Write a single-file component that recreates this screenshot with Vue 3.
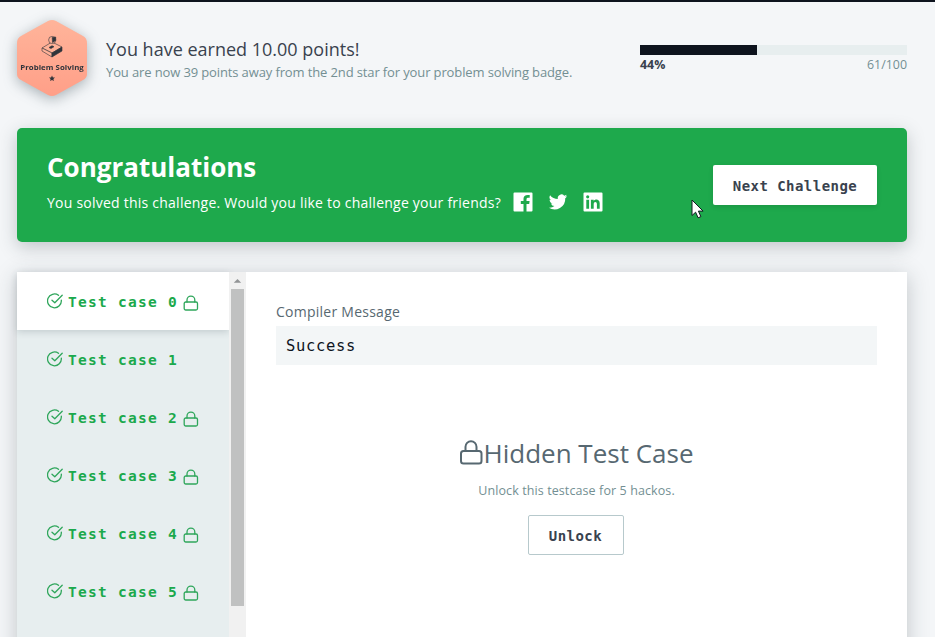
<script setup>
const cases = [
  { id: 0, locked: true },
  { id: 1, locked: false },
  { id: 2, locked: true },
  { id: 3, locked: true },
  { id: 4, locked: true },
  { id: 5, locked: true },
]
const progress = 44
</script>

<template>
  <div class="page">
    <header class="earned">
      <svg class="badge" viewBox="0 0 72 78">
        <defs>
          <linearGradient id="coral" x1="0" y1="0" x2="0" y2="1">
            <stop offset="0" stop-color="#ffb49a" />
            <stop offset="1" stop-color="#ff9f88" />
          </linearGradient>
        </defs>
        <path d="M32 2q4-2 8 0l27 15q4 2 4 7v31q0 4-4 6L40 76q-4 2-8 0L5 61q-4-2-4-6V24q0-5 4-7z" fill="url(#coral)" />
        <g stroke="#30343b" stroke-width=".6" stroke-linejoin="round">
          <path d="M26 29l10-6 10 5-10 6z" fill="#ffb197" />
          <path d="M26 29v3l10 6v-4z" fill="#ffb197" />
          <path d="M36 34l10-6v4l-10 6z" fill="#30343b" />
          <path d="M33 28.500l3-1.800 2 1-3 1.800z" fill="#30343b" />
          <circle cx="36.200" cy="21" r="3.600" fill="#ffb197" />
          <path d="M36.200 18.500l3.500-.5v3.500l-3.200 2z" fill="#30343b" />
        </g>
        <text x="36" y="51" text-anchor="middle" class="badge-name">Problem Solving</text>
        <path d="M36 56.500l.9 1.900 2.100.2-1.600 1.400.5 2.100-1.900-1.100-1.900 1.100.5-2.100-1.600-1.400 2.100-.2z" fill="#30343b" />
      </svg>
      <div class="earned-text">
        <h1>You have earned 10.00 points!</h1>
        <p>You are now 39 points away from the 2nd star for your problem solving badge.</p>
      </div>
      <div class="progress">
        <div class="track"><div class="fill" :style="{ width: progress + '%' }"></div></div>
        <div class="figures"><b>{{ progress }}%</b><span>61/100</span></div>
      </div>
    </header>

    <section class="banner">
      <div class="banner-text">
        <h2>Congratulations</h2>
        <div class="share">
          <p>You solved this challenge. Would you like to challenge your friends?</p>
          <svg class="social" viewBox="0 0 20 20">
            <path fill-rule="evenodd" d="M1.500.5h17q1 0 1 1v17q0 1-1 1h-5V12h2.700l.4-3h-3.100V7.200q0-1.400 1.500-1.400h1.700V3.100q-6.200-.9-6.200 3.700V9H7.800v3h2.700v7.500h-9q-1 0-1-1v-17q0-1 1-1z" />
          </svg>
          <svg class="social" viewBox="0 0 24 24">
            <path d="M23 5.100a9 9 0 0 1-2.600.7 4.500 4.500 0 0 0 2-2.500 9 9 0 0 1-2.900 1.100 4.500 4.500 0 0 0-7.700 4.100A12.800 12.800 0 0 1 2.500 3.800a4.500 4.500 0 0 0 1.400 6 4.500 4.500 0 0 1-2-.6c0 2.200 1.500 4.100 3.600 4.500a4.500 4.500 0 0 1-2 .1 4.500 4.500 0 0 0 4.200 3.100A9 9 0 0 1 1 18.800a12.800 12.800 0 0 0 19.700-11.400A9 9 0 0 0 23 5.100z" />
          </svg>
          <svg class="social" viewBox="0 0 20 20">
            <path fill-rule="evenodd" d="M1.500.5h17q1 0 1 1v17q0 1-1 1h-17q-1 0-1-1v-17q0-1 1-1zM3.300 7.700v9h2.800v-9zM4.700 3.200a1.600 1.600 0 1 0 0 3.200 1.600 1.600 0 0 0 0-3.200zM7.900 7.700v9h2.800v-4.600c0-2.700 3.200-2.800 3.200 0v4.600h2.800v-5.500c0-4.200-4.500-4.700-6-2.200V7.700z" />
          </svg>
        </div>
      </div>
      <button class="next">Next Challenge</button>
    </section>

    <section class="results">
      <nav class="cases">
        <div v-for="c in cases" :key="c.id" class="case" :class="{ active: c.id === 0 }">
          <svg class="check" viewBox="0 0 16 16">
            <path d="M14.300 7.100A6.900 6.900 0 1 1 11.500 2.300M5 7.200l2.800 2.600 7.400-7.500" />
          </svg>
          <span>Test case {{ c.id }}</span>
          <svg v-if="c.locked" class="lock" viewBox="0 0 16 16">
            <rect x="1.200" y="7" width="13.300" height="8" rx="1.500" />
            <path d="M4 7V5a3.900 3.900 0 0 1 7.800 0v2" />
          </svg>
        </div>
      </nav>
      <div class="scrollbar">
        <svg class="arrow" viewBox="0 0 14 17"><path d="M3 11l4-4 4 4z" /></svg>
        <div class="thumb"></div>
      </div>
      <div class="detail">
        <h3>Compiler Message</h3>
        <pre>Success</pre>
        <div class="hidden-case">
          <div class="hidden-title">
            <svg class="big-lock" viewBox="0 0 24 26">
              <rect x="1.500" y="11" width="20.500" height="12.500" rx="2.500" />
              <path d="M6 11V6.800a5.500 5.500 0 0 1 11 0V11" />
            </svg>
            <span>Hidden Test Case</span>
          </div>
          <p>Unlock this testcase for 5 hackos.</p>
          <button class="unlock">Unlock</button>
        </div>
      </div>
    </section>

    <svg class="cursor" viewBox="0 0 13 20">
      <path d="M1 1v15.500l3.600-3.300 2.500 5.600 2.800-1.200-2.500-5.500h4.700z" fill="#fff" stroke="#111b21" stroke-width="1" />
    </svg>
  </div>
</template>

<style>
body {
  overflow: hidden;
  background: #f3f6f8;
}
</style>

<style scoped>
* {
  box-sizing: border-box;
  margin: 0;
}
.page {
  position: relative;
  width: 935px;
  height: 637px;
  overflow: hidden;
  padding: 0 28px 0 17px;
  border-top: 2px solid #0e141e;
  background: #f4f6f8;
  font-family: "Open Sans", sans-serif;
  color: #39424e;
}
.earned {
  display: flex;
  height: 126px;
}
.badge {
  flex: none;
  width: 72px;
  height: 78px;
  margin: 17px 18px 0 -1px;
  overflow: visible;
  filter: drop-shadow(0 3px 7px rgba(50, 70, 80, .4));
}
.badge-name {
  font: 700 7.800px "Open Sans", sans-serif;
  letter-spacing: .06px;
  fill: #30343b;
}
.earned-text {
  width: 534px;
  padding-top: 35px;
  white-space: nowrap;
}
h1 {
  font-size: 18px;
  font-weight: 400;
  line-height: 25px;
}
.earned-text p {
  font-size: 13px;
  line-height: 20px;
  letter-spacing: -.125px;
  color: #738f93;
}
.progress {
  width: 267px;
  padding-top: 43px;
}
.track {
  height: 10px;
  background: #e7eeef;
}
.fill {
  height: 10px;
  background: #0e141e;
}
.figures {
  display: flex;
  justify-content: space-between;
  font-size: 12.400px;
  line-height: 19px;
}
.figures span {
  color: #738f93;
}
.banner {
  display: flex;
  justify-content: space-between;
  height: 114px;
  padding: 0 30px;
  border-radius: 5px;
  background: #1ea94c;
  box-shadow: 0 5px 18px rgba(40, 50, 60, .25);
  color: #fff;
}
h2 {
  margin-top: 21px;
  font-size: 26px;
  line-height: 36px;
}
.share {
  display: flex;
  align-items: center;
  height: 34px;
}
.share p {
  width: 466px;
  font-size: 14px;
  letter-spacing: .235px;
  white-space: nowrap;
}
.social {
  width: 20px;
  height: 20px;
  margin-right: 15px;
  fill: #fff;
}
button {
  height: 40px;
  padding: 2px 0 0;
  border: 0;
  border-radius: 2px;
  background: #fff;
  color: #39424e;
  font: 700 14px "DejaVu Sans Mono", monospace;
}
.next {
  width: 164px;
  margin-top: 37px;
  letter-spacing: .45px;
  box-shadow: 0 2px 5px rgba(0, 0, 0, .12);
}
.results {
  display: flex;
  width: 890px;
  height: 450px;
  margin-top: 30px;
  background: #fff;
  box-shadow: 0 4px 20px rgba(40, 50, 60, .25);
}
.cases {
  width: 212px;
  background: #e7eeef;
}
.case {
  display: flex;
  align-items: center;
  height: 58px;
  padding-left: 30px;
  color: #1ba94c;
  font: 700 14.500px "DejaVu Sans Mono", monospace;
  letter-spacing: 1.270px;
  white-space: pre;
}
.case.active {
  background: #fff;
  box-shadow: 0 2px 7px rgba(50, 70, 80, .2);
}
.case span {
  width: 115px;
  padding-top: 2px;
}
.check,
.lock {
  width: 16px;
  height: 16px;
  fill: none;
  stroke: #2fa65b;
  stroke-width: 1.300;
  stroke-linecap: round;
  stroke-linejoin: round;
}
.check {
  margin-right: 5px;
}
.lock {
  margin-top: 3px;
}
.scrollbar {
  display: flex;
  flex-direction: column;
  width: 17px;
  padding: 0 2px;
  background: #f1f1f1;
}
.arrow {
  width: 13px;
  height: 17px;
  fill: #929496;
}
.thumb {
  height: 317px;
  background: #c0c1c1;
}
.detail {
  flex: 1;
  padding: 29px 30px;
}
h3 {
  font-size: 14px;
  font-weight: 400;
  line-height: 22px;
  letter-spacing: .25px;
  color: #576871;
}
pre {
  height: 39px;
  margin-top: 3px;
  padding-left: 10px;
  background: #f3f6f7;
  color: #0e141e;
  font: 15.500px/40px "DejaVu Sans Mono", monospace;
  letter-spacing: .650px;
}
.hidden-case {
  display: flex;
  flex-direction: column;
  align-items: center;
  padding-top: 68px;
}
.hidden-title {
  display: flex;
  align-items: center;
  height: 40px;
  font-size: 26px;
  color: #576871;
  white-space: nowrap;
}
.big-lock {
  width: 25px;
  height: 26px;
  margin-left: -1px;
  fill: none;
  stroke: #576871;
  stroke-width: 2;
}
.hidden-case p {
  margin-top: 8px;
  font-size: 12.500px;
  line-height: 20px;
  letter-spacing: .1px;
  color: #738f93;
}
.unlock {
  width: 96px;
  margin: 14px 2px 0 0;
  border: 1px solid #b7c9cc;
  letter-spacing: .45px;
}
.cursor {
  position: absolute;
  left: 691px;
  top: 197px;
  width: 13px;
  height: 20px;
}
</style>
